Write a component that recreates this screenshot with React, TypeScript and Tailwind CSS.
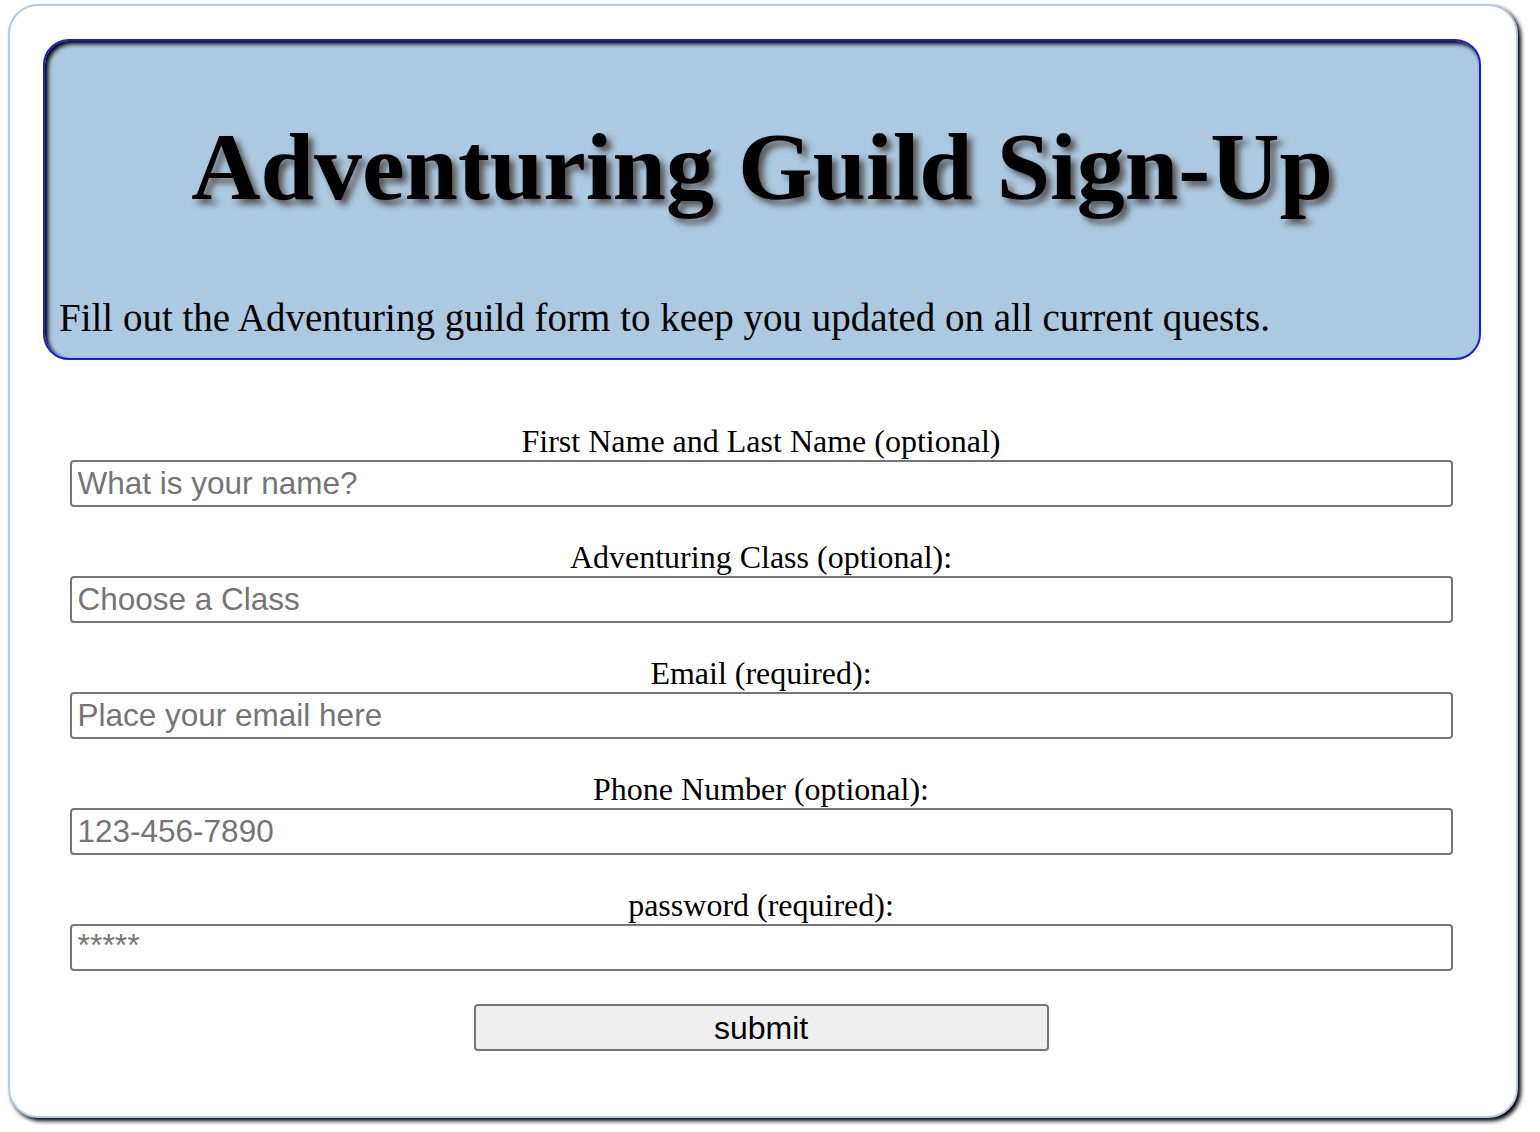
import React from "react";

const serif = "font-['Liberation_Serif','Times_New_Roman',serif]";
const sans = "font-['Liberation_Sans',Arial,sans-serif]";

function Label({ children }: { children: React.ReactNode }) {
  return (
    <label className={`${serif} text-[32px] leading-[34px] text-black h-[36px] pb-[2px] flex items-end`}>{children}</label>
  );
}

function Field({ label, placeholder, type = "text" }: { label: string; placeholder: string; type?: string }) {
  return (
    <div className="flex flex-col items-center">
      <Label>{label}</Label>
      <input
        type={type}
        placeholder={placeholder}
        className={`${sans} w-[1383px] h-[47px] border-2 border-[#767676] rounded-[4px] px-[6px] text-[31.5px] text-black placeholder:text-[#757575] outline-none bg-white`}
      />
    </div>
  );
}

export default function App() {
  return (
    <div className="w-[1540px] h-[1132px] bg-white pt-[4px] pl-[8px]">
      <div className="w-[1510px] h-[1114px] border-2 border-[#aecbe2] rounded-[30px] shadow-[3px_3px_4px_#000] bg-white pt-[33px] px-[32px]">
        <div className="w-[1438px] ml-[1px] h-[321px] bg-[#abc9e0] border-2 border-[#1c1cd0] rounded-[26px] shadow-[inset_3px_3px_4px_#000] flex flex-col">
          <h1
            className={`${serif} font-bold text-[96px] leading-[100px] text-black text-center mt-[76px] [text-shadow:5px_5px_6px_#555]`}
          >
            Adventuring Guild Sign-Up
          </h1>
          <p className={`${serif} text-[39px] leading-[42px] text-black pl-[14px] mt-[80px]`}>
            Fill out the Adventuring guild form to keep you updated on all current quests.
          </p>
        </div>
        <form className="mt-[64px] pr-[4px] flex flex-col items-center gap-[33px]">
          <Field label="First Name and Last Name (optional)" placeholder="What is your name?" />
          <Field label="Adventuring Class (optional):" placeholder="Choose a Class" />
          <Field label="Email (required):" placeholder="Place your email here" />
          <Field label="Phone Number (optional):" placeholder="123-456-7890" />
          <div className="flex flex-col items-center">
            <Label>password (required):</Label>
            <div className="w-[1383px] h-[47px] border-2 border-[#767676] rounded-[4px] px-[6px] pt-[3px] bg-white">
              <span className={`${sans} text-[32px] leading-[32px] text-[#757575] block`}>*****</span>
            </div>
          </div>
          <button
            type="button"
            className={`${sans} w-[575px] h-[47px] border-2 border-[#767676] rounded-[4px] bg-[#efefef] text-[32px] leading-[40px] text-black`}
          >
            submit
          </button>
        </form>
      </div>
    </div>
  );
}
